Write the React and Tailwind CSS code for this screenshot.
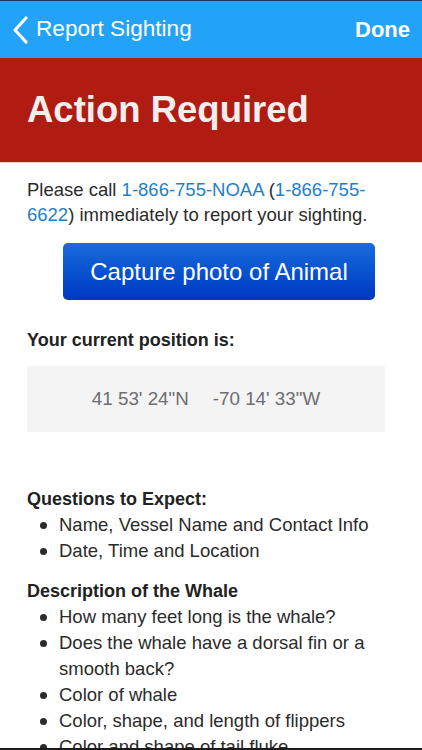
/**
 * Report Sighting - tela de ação requerida.
 */

const questions = ['Name, Vessel Name and Contact Info', 'Date, Time and Location'];

const whaleItems = [
  'How many feet long is the whale?',
  'Does the whale have a dorsal fin or a smooth back?',
  'Color of whale',
  'Color, shape, and length of flippers',
  'Color and shape of tail fluke',
  'Any distinctive markings or scars?',
];

function BulletList({ items }) {
  return (
    <ul className="pl-[13px]">
      {items.map((item) => (
        <li key={item} className="flex text-[18.5px] leading-[26px] text-[#2b2b2b]">
          <span className="w-[19px] shrink-0 flex justify-start pt-[10px]">
            <span className="w-[7px] h-[7px] rounded-full bg-[#2b2b2b]" />
          </span>
          <span className="pr-[20px]">{item}</span>
        </li>
      ))}
    </ul>
  );
}

export default function App() {
  return (
    <div
      className="w-[422px] h-[750px] overflow-hidden bg-white flex flex-col relative"
      style={{ fontFamily: '"Liberation Sans", Arial, sans-serif' }}
    >
      {/* Nav bar */}
      <div className="h-[58px] shrink-0 bg-[#22a3f8] border-t border-[#1b3a63] flex items-center justify-between pl-[12px] pr-[12px]">
        <div className="flex items-center gap-[6px] text-white">
          <svg width="18" height="30" viewBox="0 0 18 30" fill="none">
            <path d="M14 3 L3 15 L14 27" stroke="white" strokeWidth="3.2" strokeLinecap="round" strokeLinejoin="round" />
          </svg>
          <span className="text-[22.6px] leading-none">Report Sighting</span>
        </div>
        <span className="text-white text-[22px] font-bold leading-none">Done</span>
      </div>

      {/* Banner */}
      <div className="h-[105px] shrink-0 bg-[#b01c12] border-b border-[#f6c9c4] flex items-center px-[27px]">
        <h1 className="text-[36.5px] font-bold text-[#f3eeee] leading-none mt-[1px]">Action Required</h1>
      </div>

      <div className="flex-1 px-[27px] pt-[14px]">
        <p className="text-[18.5px] leading-[25px] text-[#2b2b2b]">
          Please call <span className="text-[#1e7fc8]">1-866-755-NOAA</span> (<span className="text-[#1e7fc8]">1-866-755-</span>
          <br />
          <span className="text-[#1e7fc8]">6622</span>) immediately to report your sighting.
        </p>

        <div className="flex mt-[16px]">
          <button className="ml-[36px] w-[312px] h-[57px] rounded-[5px] bg-gradient-to-b from-[#1a6bdc] to-[#0236c2] text-white text-[24px]">
            Capture photo of Animal
          </button>
        </div>

        <h2 className="mt-[29px] text-[18px] leading-[22px] font-bold text-[#222]">Your current position is:</h2>

        <div className="mt-[15px] w-[358px] h-[66px] bg-[#f4f4f4] flex items-center justify-center gap-[24px] text-[18.8px] text-[#6d6d72]">
          <span>41 53' 24"N</span>
          <span>-70 14' 33"W</span>
        </div>

        <h2 className="mt-[56px] text-[18px] leading-[22px] font-bold text-[#222]">Questions to Expect:</h2>
        <div className="mt-[2px]">
          <BulletList items={questions} />
        </div>

        <h2 className="mt-[14px] text-[18px] leading-[26px] font-bold text-[#222]">Description of the Whale</h2>
        <BulletList items={whaleItems} />
      </div>

      <div className="absolute bottom-0 left-0 right-0 h-[2px] bg-[#1a1a1a]" />
    </div>
  );
}
